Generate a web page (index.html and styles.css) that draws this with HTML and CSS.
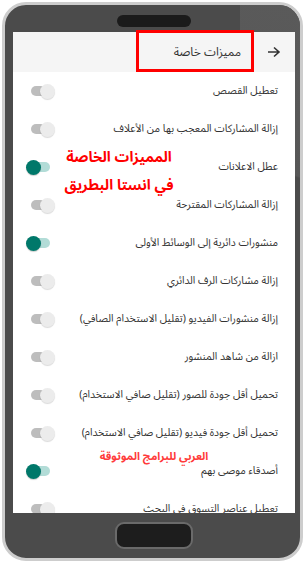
FILE: index.html
```html
<!DOCTYPE html>
<html lang="ar">
<head>
<meta charset="utf-8">
<link rel="stylesheet" href="styles.css">
</head>
<body>
<div class="phone">
  <div class="shine"></div>
  <div class="top"><div class="speaker"></div></div>
  <div class="screen">
    <div class="header" dir="rtl">
      <svg class="back" width="14" height="12" viewBox="0 0 14 12"><path d="M1 6H12M7 1.5L12 6L7 10.5" fill="none" stroke="#333" stroke-width="1.6"/></svg>
      <span class="title">مميزات خاصة</span>
    </div>
    <ul class="list" dir="rtl">
      <li class="row"><span class="label">تعطيل القصص</span><span class="sw"><span class="track"></span><span class="thumb"></span></span></li>
      <li class="row"><span class="label">إزالة المشاركات المعجب بها من الأعلاف</span><span class="sw"><span class="track"></span><span class="thumb"></span></span></li>
      <li class="row"><span class="label">عطل الاعلانات</span><span class="sw on"><span class="track"></span><span class="thumb"></span></span></li>
      <li class="row"><span class="label">إزالة المشاركات المقترحة</span><span class="sw"><span class="track"></span><span class="thumb"></span></span></li>
      <li class="row"><span class="label">منشورات دائرية إلى الوسائط الأولى</span><span class="sw on"><span class="track"></span><span class="thumb"></span></span></li>
      <li class="row"><span class="label">إزالة مشاركات الرف الدائري</span><span class="sw"><span class="track"></span><span class="thumb"></span></span></li>
      <li class="row"><span class="label">إزالة منشورات الفيديو (تقليل الاستخدام الصافي)</span><span class="sw"><span class="track"></span><span class="thumb"></span></span></li>
      <li class="row"><span class="label">ازالة من شاهد المنشور</span><span class="sw"><span class="track"></span><span class="thumb"></span></span></li>
      <li class="row"><span class="label">تحميل أقل جودة للصور (تقليل صافي الاستخدام)</span><span class="sw"><span class="track"></span><span class="thumb"></span></span></li>
      <li class="row"><span class="label">تحميل أقل جودة فيديو (تقليل صافي الاستخدام)</span><span class="sw"><span class="track"></span><span class="thumb"></span></span></li>
      <li class="row"><span class="label">أصدقاء موصى بهم</span><span class="sw on"><span class="track"></span><span class="thumb"></span></span></li>
      <li class="row"><span class="label">تعطيل عناصر التسوق في البحث</span><span class="sw"><span class="track"></span><span class="thumb"></span></span></li>
    </ul>
  </div>
  <div class="bottom"><div class="home"></div></div>
  <div class="redbox"></div>
  <div class="promo" dir="rtl"><span>المميزات الخاصة</span><span>في انستا البطريق</span></div>
  <div class="promo2" dir="rtl">العربي للبرامج الموثوقة</div>
</div>
</body>
</html>
```

FILE: styles.css
```css
* { box-sizing: border-box; }
html, body { margin: 0; padding: 0; background: #fff; }
body { width: 305px; height: 565px; overflow: hidden; font-family: "Noto Sans Arabic", "Noto Naskh Arabic", "DejaVu Sans", sans-serif; }

.phone {
  position: relative;
  margin: 2px 0 0 2px;
  width: 301px;
  height: 559px;
  border: 3px solid #cdcdcd;
  border-radius: 24px;
  background: #4b4b4b;
  padding: 0 5px 0 8px;
  display: flex;
  flex-direction: column;
  overflow: hidden;
}
.shine {
  position: absolute;
  top: 0; right: 0;
  width: 60px; height: 360px;
  background: linear-gradient(200deg, #5a5a5a 0, #575757 45%, rgba(75,75,75,0) 45.5%);
  pointer-events: none;
}
.top {
  position: relative;
  height: 27px;
  display: flex;
  justify-content: center;
  padding-top: 10px;
}
.speaker {
  width: 74px; height: 12px;
  border-radius: 6px;
  background: #1b1b1b;
}
.screen {
  position: relative;
  height: 481px;
  background: #fff;
  overflow: hidden;
}
.header {
  height: 40px;
  background: #f5f5f5;
  display: flex;
  align-items: center;
  padding-right: 14px;
  gap: 26px;
}
.back { display: block; }
.title { font-size: 12px; color: #333; }
.list { list-style: none; margin: 0; padding: 0; }
.row {
  height: 38px;
  display: flex;
  align-items: center;
  justify-content: space-between;
  padding: 0 17px 0 13px;
}
.label { font-size: 10.5px; color: #333; white-space: nowrap; }
.sw { position: relative; width: 29px; height: 15px; flex: none; }
.track {
  position: absolute;
  left: 5px; top: 2.5px;
  width: 19px; height: 10px;
  border-radius: 5px;
  background: #bdbdbd;
}
.thumb {
  position: absolute;
  right: 0; top: 0;
  width: 15px; height: 15px;
  border-radius: 50%;
  background: #ececec;
  box-shadow: 0 1px 1px rgba(0,0,0,0.15);
}
.sw.on .track { background: #b2dcd7; }
.sw.on .thumb { right: auto; left: 0; background: #00786a; box-shadow: 0 1px 1px rgba(0,0,0,0.2); }
.bottom {
  flex: 1;
  display: flex;
  justify-content: center;
  padding-top: 9px;
}
.home {
  width: 78px; height: 27px;
  border-radius: 9px;
  background: #1d1d1d;
  border: 2px solid #6a6a6a;
}
.redbox {
  position: absolute;
  left: 131px; top: 25px;
  width: 118px; height: 42px;
  border: 3px solid #ff0000;
}
.promo {
  position: absolute;
  left: 34px; top: 139px;
  width: 160px;
  display: flex;
  flex-direction: column;
  align-items: center;
  font-size: 14.5px;
  line-height: 28px;
  font-weight: bold;
  color: #ff0000;
  white-space: nowrap;
}
.promo2 {
  position: absolute;
  left: 69px; top: 443px;
  width: 160px;
  text-align: center;
  font-size: 11px;
  line-height: 17px;
  font-weight: bold;
  color: #ff3b3b;
  white-space: nowrap;
}
```
